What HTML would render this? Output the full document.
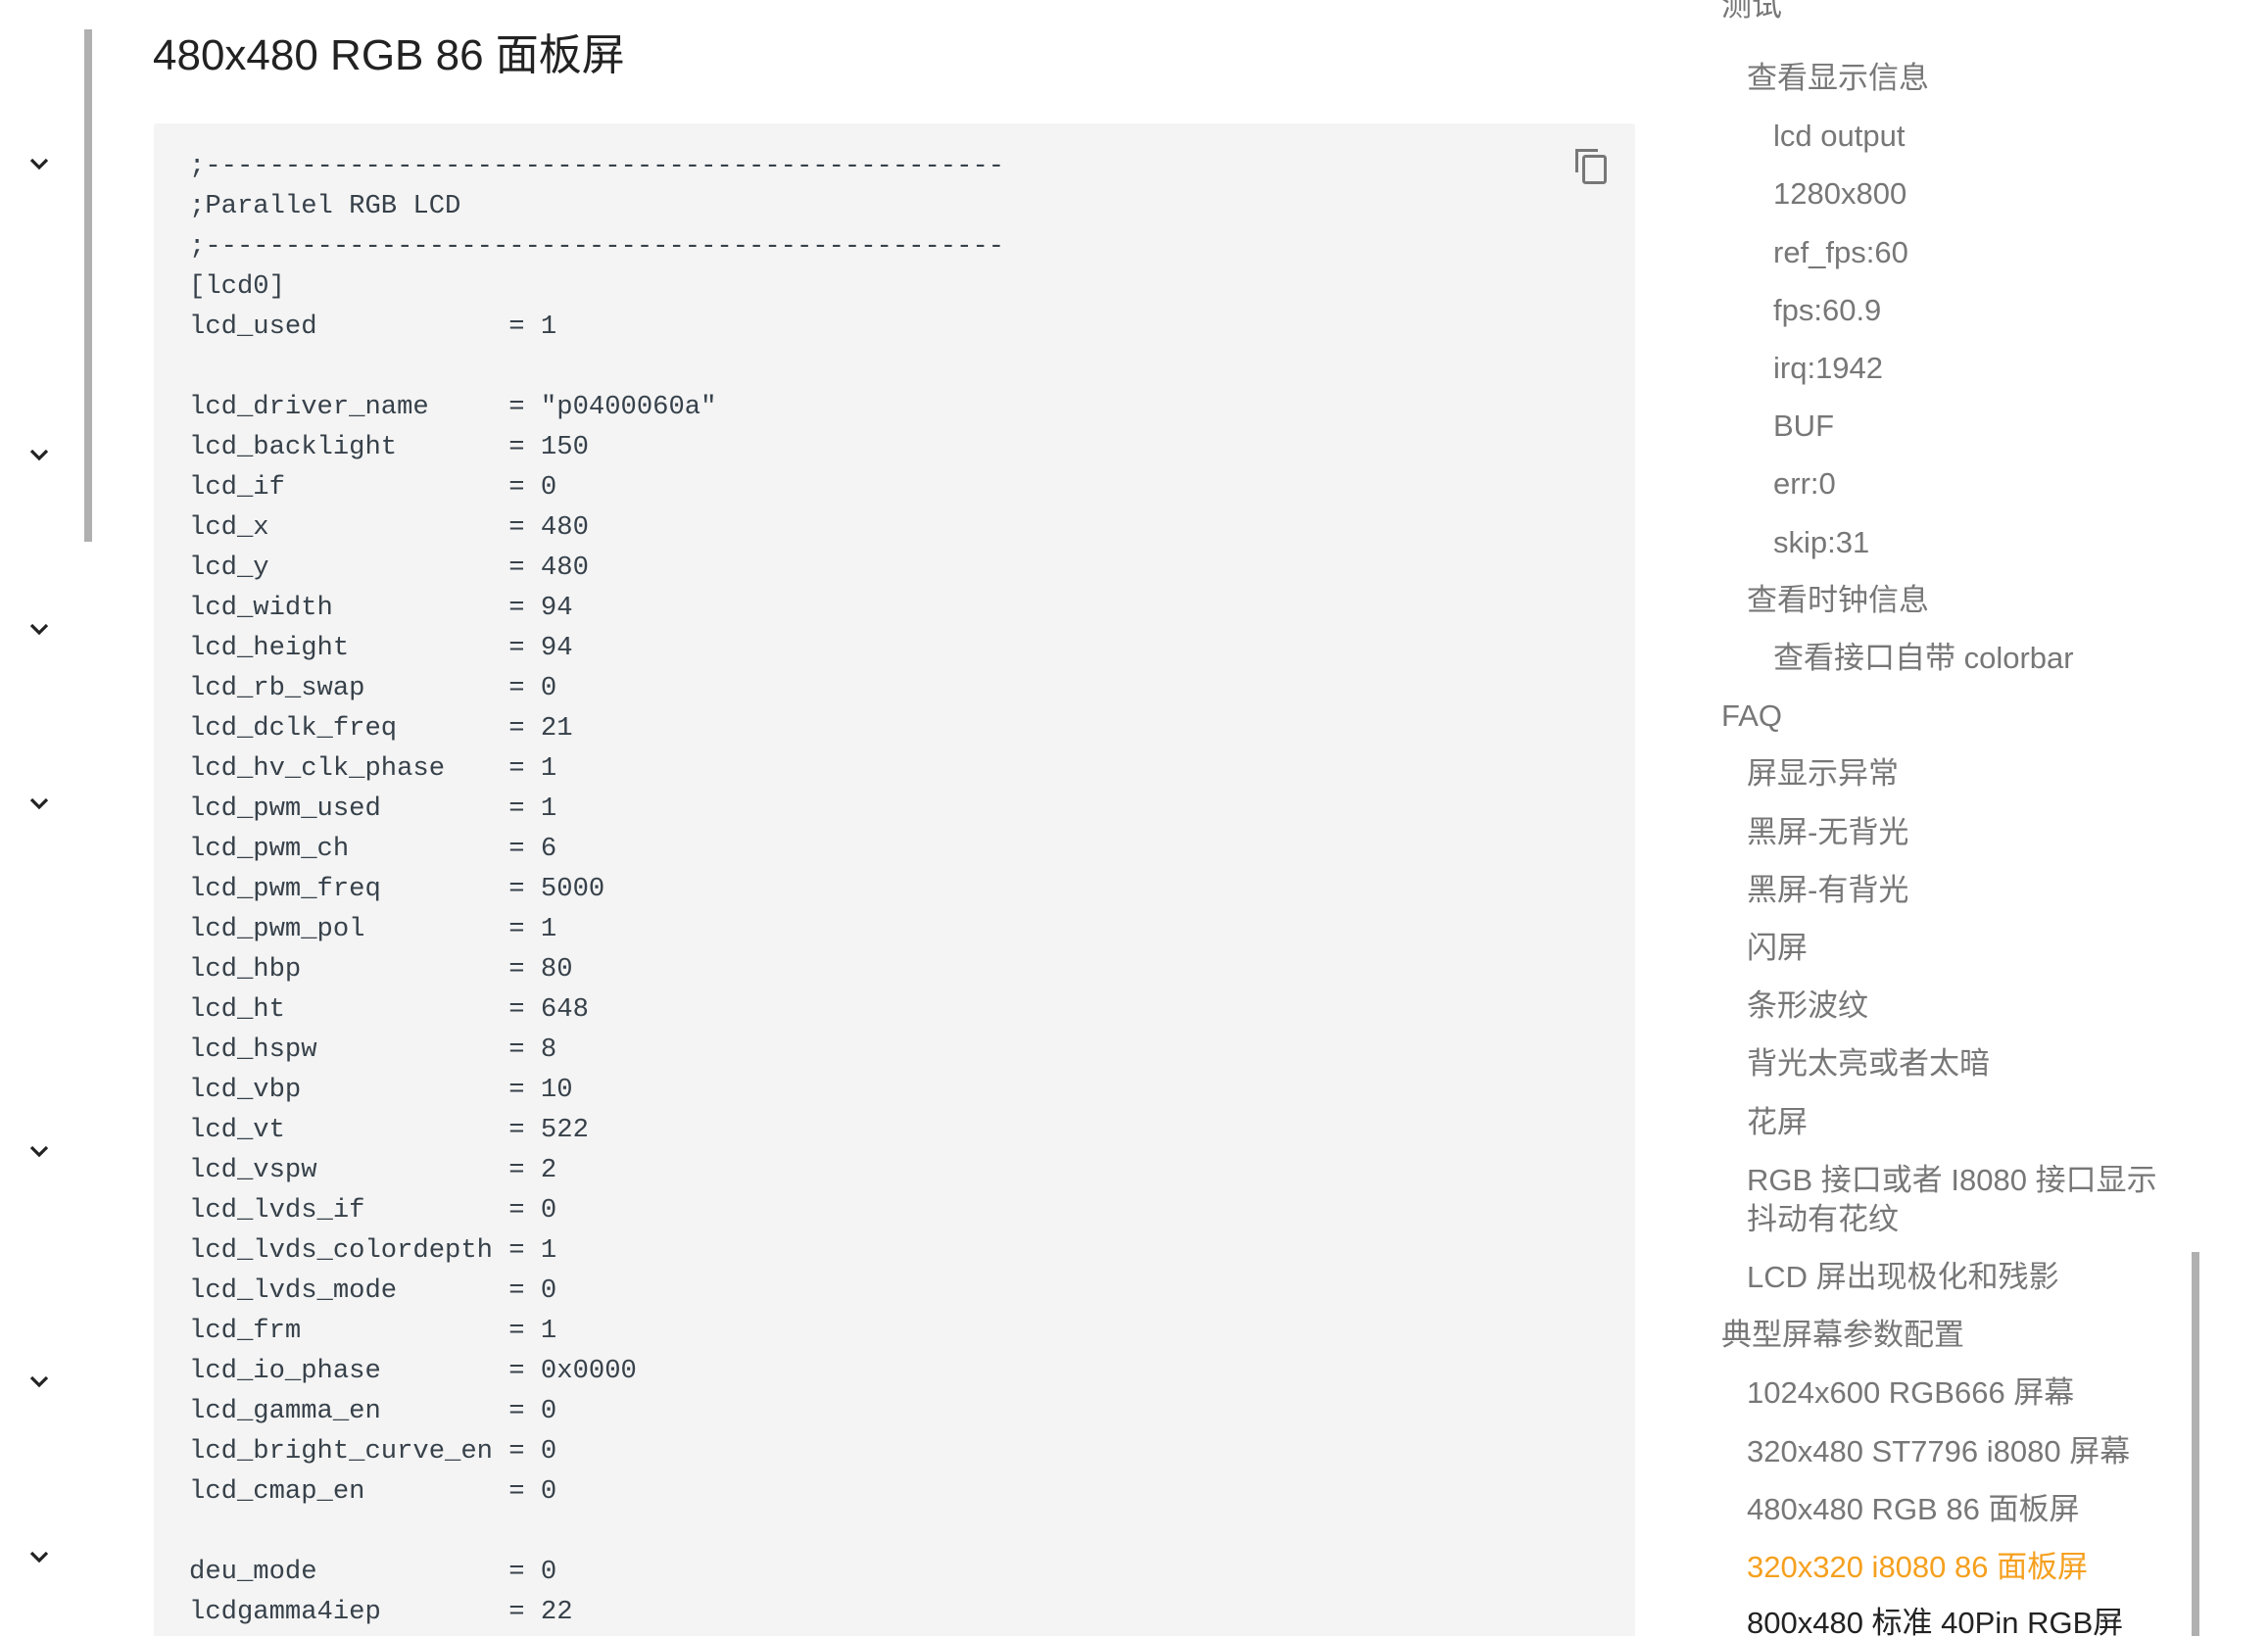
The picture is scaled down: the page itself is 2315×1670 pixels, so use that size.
<!DOCTYPE html>
<html><head><meta charset="utf-8">
<style>
html,body{margin:0;padding:0;width:2315px;height:1670px;overflow:hidden;background:#fff}
#w{position:relative;width:2315px;height:1670px;overflow:hidden}
.bar{position:absolute;left:86px;top:30px;width:8px;height:523px;background:#b0b0b0}
.chev{position:absolute;left:30px;width:20px;height:14px}
h1{position:absolute;left:156px;top:22px;margin:0;font:400 44px/70px "Liberation Sans","Noto Sans CJK SC",sans-serif;color:#222}
.code{position:absolute;left:157px;top:126px;width:1512px;height:1544px;background:#f4f4f4;border-radius:3px 3px 0 0}
pre{position:absolute;left:193px;top:149px;height:1521px;overflow:hidden;margin:0;font:27.2px/41.0px "Liberation Mono","Noto Sans CJK SC",monospace;color:#37414a}
.copy{position:absolute;left:1604px;top:150px}
.nav div{position:absolute;font:31px/40px "Liberation Sans","Noto Sans CJK SC",sans-serif;color:#777;white-space:nowrap}
.l1{left:1757px}.l2{left:1783px}.l3{left:1810px}
.sb{position:absolute;left:2237px;top:1278px;width:8px;height:392px;background:#b0b0b0}
</style></head><body><div id="w">
<div class="bar"></div>
<svg class="chev" style="top:160px" viewBox="0 0 20 14"><path d="M2 3 L10 11 L18 3" fill="none" stroke="#222" stroke-width="3.2"/></svg>
<svg class="chev" style="top:457px" viewBox="0 0 20 14"><path d="M2 3 L10 11 L18 3" fill="none" stroke="#222" stroke-width="3.2"/></svg>
<svg class="chev" style="top:635px" viewBox="0 0 20 14"><path d="M2 3 L10 11 L18 3" fill="none" stroke="#222" stroke-width="3.2"/></svg>
<svg class="chev" style="top:813px" viewBox="0 0 20 14"><path d="M2 3 L10 11 L18 3" fill="none" stroke="#222" stroke-width="3.2"/></svg>
<svg class="chev" style="top:1168px" viewBox="0 0 20 14"><path d="M2 3 L10 11 L18 3" fill="none" stroke="#222" stroke-width="3.2"/></svg>
<svg class="chev" style="top:1403px" viewBox="0 0 20 14"><path d="M2 3 L10 11 L18 3" fill="none" stroke="#222" stroke-width="3.2"/></svg>
<svg class="chev" style="top:1582px" viewBox="0 0 20 14"><path d="M2 3 L10 11 L18 3" fill="none" stroke="#222" stroke-width="3.2"/></svg>
<h1>480x480 RGB 86 面板屏</h1>
<div class="code"></div>
<svg class="copy" width="40" height="40" viewBox="0 0 40 40"><path d="M5.5 26 V3.5 H27" fill="none" stroke="#777" stroke-width="3"/><rect x="12.5" y="9.5" width="22" height="27" rx="2" fill="none" stroke="#777" stroke-width="3"/></svg>
<pre>;--------------------------------------------------
;Parallel RGB LCD
;--------------------------------------------------
[lcd0]
lcd_used            = 1

lcd_driver_name     = "p0400060a"
lcd_backlight       = 150
lcd_if              = 0
lcd_x               = 480
lcd_y               = 480
lcd_width           = 94
lcd_height          = 94
lcd_rb_swap         = 0
lcd_dclk_freq       = 21
lcd_hv_clk_phase    = 1
lcd_pwm_used        = 1
lcd_pwm_ch          = 6
lcd_pwm_freq        = 5000
lcd_pwm_pol         = 1
lcd_hbp             = 80
lcd_ht              = 648
lcd_hspw            = 8
lcd_vbp             = 10
lcd_vt              = 522
lcd_vspw            = 2
lcd_lvds_if         = 0
lcd_lvds_colordepth = 1
lcd_lvds_mode       = 0
lcd_frm             = 1
lcd_io_phase        = 0x0000
lcd_gamma_en        = 0
lcd_bright_curve_en = 0
lcd_cmap_en         = 0

deu_mode            = 0
lcdgamma4iep        = 22</pre>
<div class="nav">
<div class="l1" style="top:-14px">测试</div>
<div class="l2" style="top:60px">查看显示信息</div>
<div class="l3" style="top:119px">lcd output</div>
<div class="l3" style="top:178px">1280x800</div>
<div class="l3" style="top:238px">ref_fps:60</div>
<div class="l3" style="top:297px">fps:60.9</div>
<div class="l3" style="top:356px">irq:1942</div>
<div class="l3" style="top:415px">BUF</div>
<div class="l3" style="top:474px">err:0</div>
<div class="l3" style="top:534px">skip:31</div>
<div class="l2" style="top:593px">查看时钟信息</div>
<div class="l3" style="top:652px">查看接口自带 colorbar</div>
<div class="l1" style="top:711px">FAQ</div>
<div class="l2" style="top:770px">屏显示异常</div>
<div class="l2" style="top:830px">黑屏-无背光</div>
<div class="l2" style="top:889px">黑屏-有背光</div>
<div class="l2" style="top:948px">闪屏</div>
<div class="l2" style="top:1007px">条形波纹</div>
<div class="l2" style="top:1066px">背光太亮或者太暗</div>
<div class="l2" style="top:1126px">花屏</div>
<div class="l2" style="top:1185px">RGB 接口或者 I8080 接口显示</div>
<div class="l2" style="top:1225px">抖动有花纹</div>
<div class="l2" style="top:1284px">LCD 屏出现极化和残影</div>
<div class="l1" style="top:1343px">典型屏幕参数配置</div>
<div class="l2" style="top:1402px">1024x600 RGB666 屏幕</div>
<div class="l2" style="top:1462px">320x480 ST7796 i8080 屏幕</div>
<div class="l2" style="top:1521px">480x480 RGB 86 面板屏</div>
<div class="l2" style="top:1580px;color:#f5a01f">320x320 i8080 86 面板屏</div>
<div class="l2" style="top:1637px;color:#222">800x480 标准 40Pin RGB屏</div>
</div>
<div class="sb"></div>
</div></body></html>
